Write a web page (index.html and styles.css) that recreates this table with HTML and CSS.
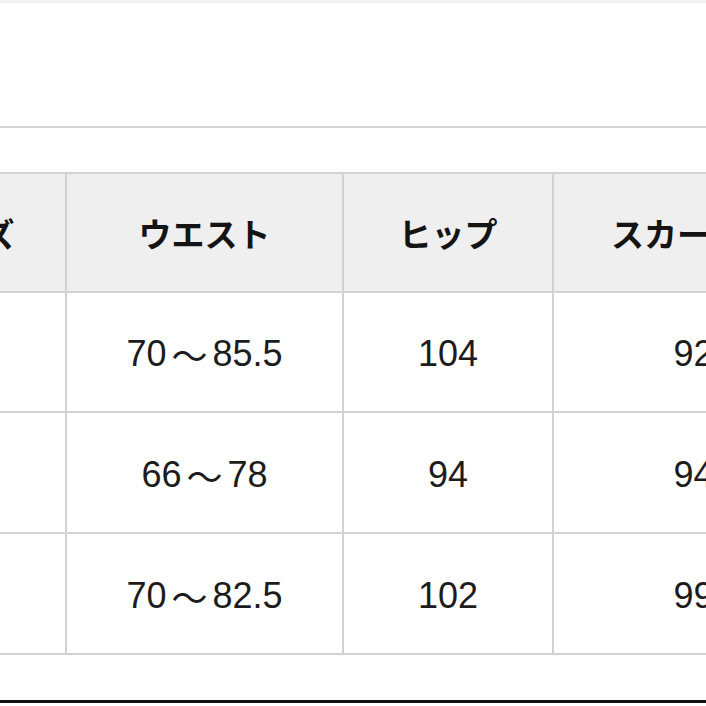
FILE: index.html
```html
<!DOCTYPE html>
<html lang="ja">
<head>
<meta charset="utf-8">
<link rel="stylesheet" href="styles.css">
</head>
<body>
<div class="page">
  <div class="top-strip"></div>
  <div class="top-space"></div>
  <div class="rule"></div>
  <div class="table-wrap">
    <div class="size-table">
      <div class="cell head">サイズ</div>
      <div class="cell head">ウエスト</div>
      <div class="cell head">ヒップ</div>
      <div class="cell head">スカート丈</div>

      <div class="cell">M</div>
      <div class="cell">70<span class="tilde">～</span>85.5</div>
      <div class="cell">104</div>
      <div class="cell">92</div>

      <div class="cell">S</div>
      <div class="cell">66<span class="tilde">～</span>78</div>
      <div class="cell">94</div>
      <div class="cell">94</div>

      <div class="cell">L</div>
      <div class="cell">70<span class="tilde">～</span>82.5</div>
      <div class="cell">102</div>
      <div class="cell">99</div>
    </div>
  </div>
  <div class="bottom-rule"></div>
</div>
</body>
</html>
```

FILE: styles.css
```css
html, body {
  margin: 0;
  padding: 0;
  background: #ffffff;
  overflow: hidden;
}

.page {
  width: 706px;
  height: 706px;
  overflow: hidden;
  display: flex;
  flex-direction: column;
  font-family: "Liberation Sans", "Noto Sans CJK JP", sans-serif;
  color: #1c1c1c;
}

.top-strip {
  height: 3px;
  background: #f2f2f2;
  flex: none;
}

.top-space {
  height: 123px;
  flex: none;
}

.rule {
  height: 2px;
  background: #d3d3d3;
  flex: none;
}

.table-wrap {
  margin-top: 44px;
  overflow: hidden;
  flex: none;
}

.size-table {
  display: grid;
  grid-template-columns: 201px 277px 210px 281px;
  grid-template-rows: 119px 120px 121px 121px;
  margin-left: -134px;
  width: max-content;
  border-top: 2px solid #d2d2d2;
}

.cell {
  box-sizing: border-box;
  border-right: 2px solid #d2d2d2;
  border-bottom: 2px solid #d2d2d2;
  display: flex;
  align-items: center;
  justify-content: center;
  font-size: 36px;
  line-height: 42px;
  padding-top: 4px;
  white-space: nowrap;
  background: #ffffff;
}

.tilde {
  font-family: "Noto Sans CJK JP", sans-serif;
  margin: 0 5px;
}

.cell.head {
  background: #efefef;
  font-family: "Noto Sans CJK JP", sans-serif;
  font-weight: 700;
  font-size: 33px;
  padding-top: 0;
  color: #141414;
}

.bottom-rule {
  margin-top: 45px;
  height: 3px;
  background: #111111;
  flex: none;
}
```
